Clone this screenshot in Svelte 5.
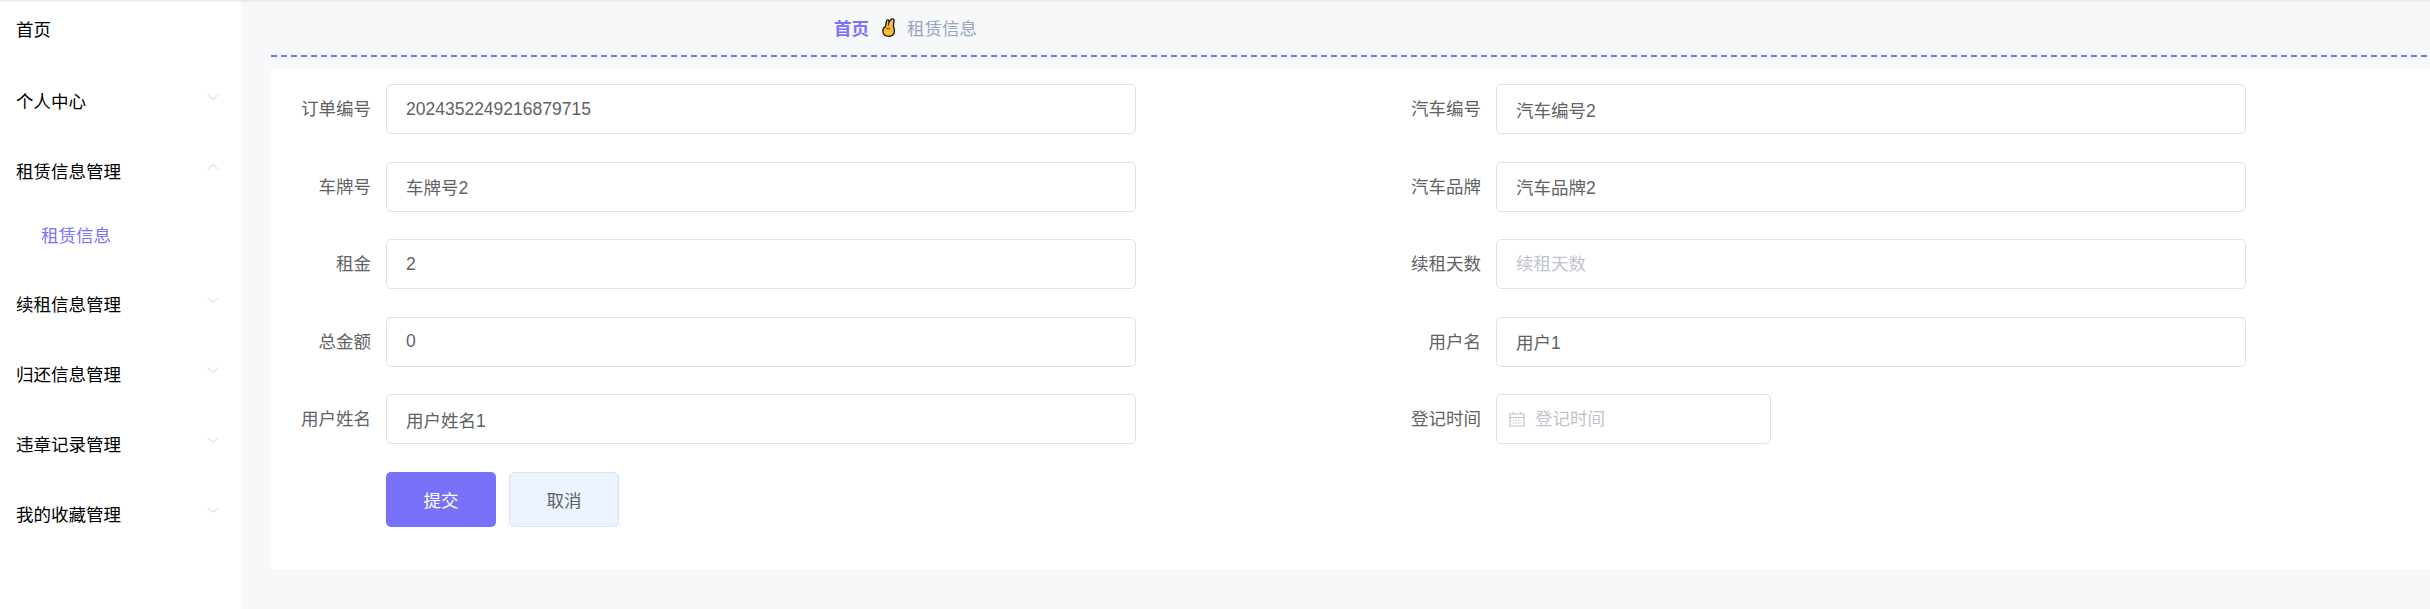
<script>
  const menu = [
    { name: '个人中心', arrow: 'down' },
    { name: '租赁信息管理', arrow: 'up', sub: '租赁信息' },
    { name: '续租信息管理', arrow: 'down' },
    { name: '归还信息管理', arrow: 'down' },
    { name: '违章记录管理', arrow: 'down' },
    { name: '我的收藏管理', arrow: 'down' }
  ]

  const fields = [
    { label: '订单编号', value: '2024352249216879715' },
    { label: '汽车编号', value: '汽车编号2' },
    { label: '车牌号', value: '车牌号2' },
    { label: '汽车品牌', value: '汽车品牌2' },
    { label: '租金', value: '2' },
    { label: '续租天数', value: '', placeholder: '续租天数' },
    { label: '总金额', value: '0' },
    { label: '用户名', value: '用户1' },
    { label: '用户姓名', value: '用户姓名1' },
    { label: '登记时间', value: '', placeholder: '登记时间', date: true }
  ]
</script>

<div class="page">
  <aside class="sidebar">
    <div class="home">首页</div>
    {#each menu as item}
      <div class="menu-item">
        <span>{item.name}</span>
        <svg class="arrow" viewBox="0 0 12 6" width="12" height="6">
          {#if item.arrow === 'up'}
            <path d="M0.5 5.5 L6 0.7 L11.5 5.5" />
          {:else}
            <path d="M0.5 0.5 L6 5.3 L11.5 0.5" />
          {/if}
        </svg>
      </div>
      {#if item.sub}
        <div class="sub-item">{item.sub}</div>
      {/if}
    {/each}
  </aside>

  <main class="main">
    <nav class="crumb">
      <b>首页</b>
      <svg class="hand" viewBox="0 0 13 19" width="13" height="19">
        <path class="hand-fill" d="M0.9 12 Q1 10 3.4 8.6 L4.4 3.4 Q4.8 1.6 6 1.9 Q7.2 2.3 7 3.8 L8.9 1.5 Q10 0.4 11.3 1 Q12.3 1.8 11.9 3.2 L11.4 8.6 Q12.5 10.5 12.4 13 Q12.2 18.2 7 18.3 Q1.5 18.3 1 14 Z" />
        <path class="hand-line" d="M7 3.8 L6.3 8 M4.6 10.6 Q6.6 9.8 8.4 11" />
      </svg>
      <span>租赁信息</span>
    </nav>

    <section class="card">
      <form class="form">
        {#each fields as field}
          <div class="field">
            <label for={field.label}>{field.label}</label>
            {#if field.date}
              <div class="date">
                <svg class="calendar" viewBox="0 0 16 16" width="16" height="16">
                  <path d="M1 3 H15 V15 H1 Z M1 6.5 H15 M4.5 1 V3 M11.5 1 V3" />
                  <path class="dots" d="M4 9 H12 M4 12 H12" />
                </svg>
                <input id={field.label} value={field.value} placeholder={field.placeholder} />
              </div>
            {:else}
              <input id={field.label} value={field.value} placeholder={field.placeholder} />
            {/if}
          </div>
        {/each}
        <div class="actions">
          <button type="button" class="submit">提交</button>
          <button type="button" class="cancel">取消</button>
        </div>
      </form>
    </section>
  </main>
</div>

<style>
  :global(body) {
    margin: 0;
    background: #f6f8fa;
  }

  .page {
    position: relative;
    display: flex;
    width: 2430px;
    height: 609px;
    overflow: hidden;
    font-family: "Liberation Sans", "Noto Sans CJK SC", sans-serif;
    font-size: 17.5px;
  }

  /* soft shadow from the header that sits above the shot */
  .page::after {
    content: "";
    position: absolute;
    top: 0;
    left: 0;
    right: 0;
    height: 3px;
    background: linear-gradient(#e6e7ea, rgba(240, 241, 244, 0));
  }

  .sidebar {
    width: 241px;
    flex: none;
    background: #fff;
    color: #000;
  }

  .home {
    height: 60px;
    margin-bottom: 5px;
    padding-left: 16px;
    line-height: 60px;
  }

  .menu-item {
    display: flex;
    align-items: center;
    justify-content: space-between;
    height: 70px;
    padding: 0 22px 0 16px;
  }

  .arrow {
    margin-top: -6px;
  }

  .arrow path {
    fill: none;
    stroke: #e3e3ee;
    stroke-width: 1.2;
  }

  .sub-item {
    height: 63px;
    line-height: 62px;
    padding-left: 41px;
    color: #7a72fc;
  }

  .main {
    flex: 1;
    padding-left: 30px;
  }

  .crumb {
    display: flex;
    align-items: center;
    height: 57px;
    padding: 0 0 2px 563px;
    box-sizing: border-box;
    background: repeating-linear-gradient(90deg, #7a72fc 0 6px, transparent 6px 10px) left bottom / 100% 2px no-repeat;
    color: #97a8be;
  }

  .crumb b {
    color: #7a72fc;
  }

  .hand {
    margin: 0 12px 0 13px;
  }

  .hand-fill {
    fill: #fbbd32;
    stroke: #111;
    stroke-width: 1.3;
  }

  .hand-line {
    fill: none;
    stroke: #111;
    stroke-width: 0.8;
  }

  .card {
    height: 500px;
    margin-top: 12px;
    padding-top: 15px;
    box-sizing: border-box;
    background: #fff;
  }

  .form {
    display: grid;
    grid-template-columns: 1110px 1fr;
    grid-auto-rows: 77.5px;
  }

  .field {
    display: flex;
    align-items: flex-start;
  }

  label {
    width: 100px;
    margin-right: 15px;
    line-height: 50px;
    text-align: right;
    color: #606266;
  }

  input {
    width: 750px;
    height: 50px;
    padding: 0 19px;
    box-sizing: border-box;
    border: 1px solid #dfe1ea;
    border-radius: 5px;
    outline: none;
    background: #fff;
    font: inherit;
    color: #606266;
  }

  input::placeholder {
    color: #c0c4cc;
  }

  .date {
    position: relative;
  }

  .date input {
    width: 275px;
    padding-left: 38px;
  }

  .calendar {
    position: absolute;
    left: 13px;
    top: 17px;
  }

  .calendar path {
    fill: none;
    stroke: #bcc1cb;
    stroke-width: 1.2;
  }

  .calendar .dots {
    stroke-dasharray: 1.5 1;
  }

  .actions {
    grid-column: 1 / -1;
    display: flex;
    align-items: flex-start;
    gap: 13px;
    padding-left: 115px;
  }

  button {
    width: 110px;
    height: 55px;
    border-radius: 5px;
    font: inherit;
  }

  .submit {
    border: none;
    background: #7872fb;
    color: #fff;
  }

  .cancel {
    border: 1px solid #dde3ee;
    background: #ebf3fe;
    color: #606266;
  }
</style>
